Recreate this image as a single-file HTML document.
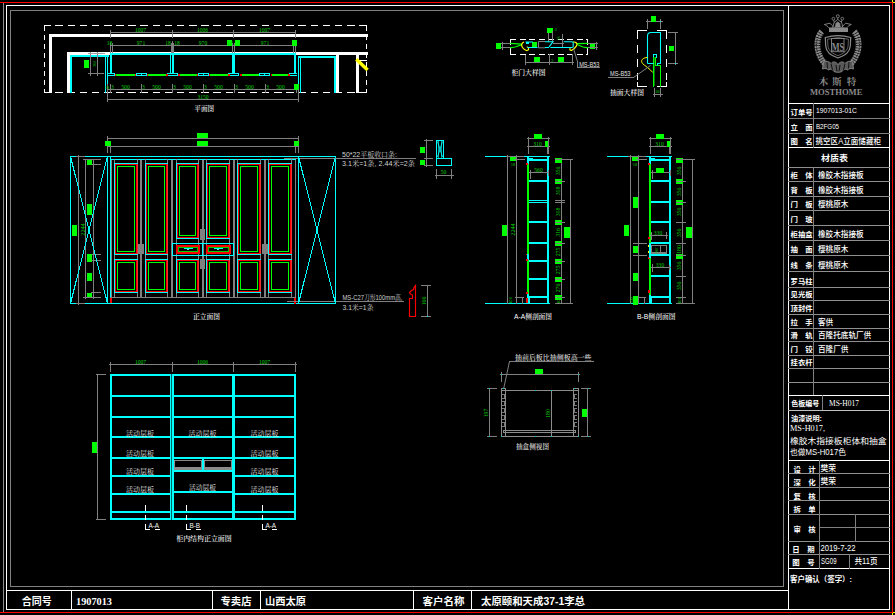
<!DOCTYPE html>
<html lang="zh"><head><meta charset="utf-8"><title>CAD</title>
<style>
html,body{margin:0;padding:0;background:#000;}
body{width:895px;height:615px;overflow:hidden;position:relative;}
svg{position:absolute;left:0;top:0;display:block;}
text{white-space:pre;}
.s{font-family:"Liberation Serif","Noto Serif CJK SC",serif;}
.h{font-family:"Liberation Sans","Noto Sans CJK SC",sans-serif;}
.m{font-family:"Liberation Mono","Noto Sans CJK SC",monospace;}
.n{font-family:"Liberation Sans","Noto Serif CJK SC",sans-serif;}
</style></head><body>
<svg width="895" height="615" viewBox="0 0 895 615">
<rect x="0" y="0" width="895" height="615" fill="#000"/>
<g shape-rendering="crispEdges">
<rect x="0" y="2" width="893" height="1" fill="#f00"/>
<rect x="892" y="2" width="1" height="611" fill="#f00"/>
<rect x="0" y="612" width="893" height="1" fill="#f00"/>
<rect x="892" y="0" width="1" height="2" fill="#ff0"/>
<rect x="893" y="2" width="2" height="1" fill="#ff0"/>
<rect x="893" y="612" width="2" height="1" fill="#ff0"/>
<rect x="892" y="613" width="1" height="2" fill="#ff0"/>
<rect x="3" y="3" width="1" height="609" fill="#8c8c8c"/>
<rect x="6" y="5" width="884" height="1" fill="#fff"/>
<rect x="6" y="609" width="884" height="1" fill="#fff"/>
<rect x="6" y="5" width="1" height="605" fill="#fff"/>
<rect x="889" y="5" width="1" height="605" fill="#fff"/>
<rect x="10" y="10" width="774" height="1" fill="#808080"/>
<rect x="10" y="586" width="774" height="1" fill="#808080"/>
<rect x="10" y="10" width="1" height="577" fill="#808080"/>
<rect x="783" y="10" width="1" height="577" fill="#808080"/>
<rect x="6" y="590" width="783" height="1" fill="#fff"/>
<rect x="71" y="590" width="1" height="20" fill="#fff"/>
<rect x="212" y="590" width="1" height="20" fill="#fff"/>
<rect x="260" y="590" width="1" height="20" fill="#fff"/>
<rect x="413" y="590" width="1" height="20" fill="#fff"/>
<rect x="471" y="590" width="1" height="20" fill="#fff"/>
<rect x="788" y="5" width="1" height="605" fill="#fff"/>
<rect x="788" y="103" width="102" height="1" fill="#fff"/>
<rect x="788" y="118" width="102" height="1" fill="#808080"/>
<rect x="788" y="133" width="102" height="1" fill="#808080"/>
<rect x="788" y="147" width="102" height="1" fill="#fff"/>
<rect x="788" y="167" width="102" height="1" fill="#909090"/>
<rect x="788" y="181" width="102" height="1" fill="#909090"/>
<rect x="788" y="196" width="102" height="1" fill="#909090"/>
<rect x="788" y="210" width="102" height="1" fill="#909090"/>
<rect x="788" y="225" width="102" height="1" fill="#909090"/>
<rect x="788" y="240" width="102" height="1" fill="#909090"/>
<rect x="788" y="255" width="102" height="1" fill="#909090"/>
<rect x="788" y="271" width="102" height="1" fill="#909090"/>
<rect x="788" y="287" width="102" height="1" fill="#909090"/>
<rect x="788" y="300" width="102" height="1" fill="#909090"/>
<rect x="788" y="314" width="102" height="1" fill="#909090"/>
<rect x="788" y="328" width="102" height="1" fill="#909090"/>
<rect x="788" y="341" width="102" height="1" fill="#909090"/>
<rect x="788" y="355" width="102" height="1" fill="#909090"/>
<rect x="788" y="368" width="102" height="1" fill="#909090"/>
<rect x="788" y="382" width="102" height="1" fill="#909090"/>
<rect x="813" y="103" width="1" height="45" fill="#808080"/>
<rect x="813" y="167" width="1" height="229" fill="#808080"/>
<rect x="788" y="395" width="102" height="1" fill="#fff"/>
<rect x="822" y="395" width="1" height="16" fill="#808080"/>
<rect x="788" y="410" width="102" height="1" fill="#c0c0c0"/>
<rect x="788" y="460" width="102" height="1" fill="#fff"/>
<rect x="788" y="473" width="102" height="1" fill="#909090"/>
<rect x="788" y="487" width="102" height="1" fill="#909090"/>
<rect x="788" y="500" width="102" height="1" fill="#909090"/>
<rect x="788" y="514" width="102" height="1" fill="#909090"/>
<rect x="788" y="541" width="102" height="1" fill="#909090"/>
<rect x="788" y="554" width="102" height="1" fill="#909090"/>
<rect x="788" y="568" width="102" height="1" fill="#fff"/>
<rect x="819" y="460" width="1" height="109" fill="#808080"/>
<rect x="819" y="527" width="71" height="1" fill="#808080"/>
<rect x="855" y="514" width="1" height="28" fill="#808080"/>
<rect x="849" y="554" width="1" height="15" fill="#808080"/>
<rect x="44" y="25" width="6.75" height="1" fill="#fff"/>
<rect x="55.4" y="25" width="7.5" height="1" fill="#fff"/>
<rect x="67.55" y="25" width="7.5" height="1" fill="#fff"/>
<rect x="79.7" y="25" width="7.5" height="1" fill="#fff"/>
<rect x="91.85" y="25" width="7.5" height="1" fill="#fff"/>
<rect x="104" y="25" width="7.5" height="1" fill="#fff"/>
<rect x="116.15" y="25" width="7.5" height="1" fill="#fff"/>
<rect x="128.3" y="25" width="7.5" height="1" fill="#fff"/>
<rect x="140.45" y="25" width="7.5" height="1" fill="#fff"/>
<rect x="152.6" y="25" width="7.5" height="1" fill="#fff"/>
<rect x="164.75" y="25" width="7.5" height="1" fill="#fff"/>
<rect x="176.9" y="25" width="7.5" height="1" fill="#fff"/>
<rect x="189.05" y="25" width="7.5" height="1" fill="#fff"/>
<rect x="201.2" y="25" width="7.5" height="1" fill="#fff"/>
<rect x="213.35" y="25" width="7.5" height="1" fill="#fff"/>
<rect x="225.5" y="25" width="7.5" height="1" fill="#fff"/>
<rect x="237.65" y="25" width="7.5" height="1" fill="#fff"/>
<rect x="249.8" y="25" width="7.5" height="1" fill="#fff"/>
<rect x="261.95" y="25" width="7.5" height="1" fill="#fff"/>
<rect x="274.1" y="25" width="7.5" height="1" fill="#fff"/>
<rect x="286.25" y="25" width="7.5" height="1" fill="#fff"/>
<rect x="298.4" y="25" width="7.5" height="1" fill="#fff"/>
<rect x="310.55" y="25" width="7.5" height="1" fill="#fff"/>
<rect x="322.7" y="25" width="7.5" height="1" fill="#fff"/>
<rect x="334.85" y="25" width="7.5" height="1" fill="#fff"/>
<rect x="347" y="25" width="7.5" height="1" fill="#fff"/>
<rect x="359.15" y="25" width="7.5" height="1" fill="#fff"/>
<rect x="44" y="92" width="6.75" height="1" fill="#fff"/>
<rect x="55.4" y="92" width="7.5" height="1" fill="#fff"/>
<rect x="67.55" y="92" width="7.5" height="1" fill="#fff"/>
<rect x="79.7" y="92" width="7.5" height="1" fill="#fff"/>
<rect x="91.85" y="92" width="7.5" height="1" fill="#fff"/>
<rect x="104" y="92" width="7.5" height="1" fill="#fff"/>
<rect x="116.15" y="92" width="7.5" height="1" fill="#fff"/>
<rect x="128.3" y="92" width="7.5" height="1" fill="#fff"/>
<rect x="140.45" y="92" width="7.5" height="1" fill="#fff"/>
<rect x="152.6" y="92" width="7.5" height="1" fill="#fff"/>
<rect x="164.75" y="92" width="7.5" height="1" fill="#fff"/>
<rect x="176.9" y="92" width="7.5" height="1" fill="#fff"/>
<rect x="189.05" y="92" width="7.5" height="1" fill="#fff"/>
<rect x="201.2" y="92" width="7.5" height="1" fill="#fff"/>
<rect x="213.35" y="92" width="7.5" height="1" fill="#fff"/>
<rect x="225.5" y="92" width="7.5" height="1" fill="#fff"/>
<rect x="237.65" y="92" width="7.5" height="1" fill="#fff"/>
<rect x="249.8" y="92" width="7.5" height="1" fill="#fff"/>
<rect x="261.95" y="92" width="7.5" height="1" fill="#fff"/>
<rect x="274.1" y="92" width="7.5" height="1" fill="#fff"/>
<rect x="286.25" y="92" width="7.5" height="1" fill="#fff"/>
<rect x="298.4" y="92" width="7.5" height="1" fill="#fff"/>
<rect x="310.55" y="92" width="7.5" height="1" fill="#fff"/>
<rect x="322.7" y="92" width="7.5" height="1" fill="#fff"/>
<rect x="334.85" y="92" width="7.5" height="1" fill="#fff"/>
<rect x="347" y="92" width="7.5" height="1" fill="#fff"/>
<rect x="359.15" y="92" width="7.5" height="1" fill="#fff"/>
<rect x="44" y="25.5" width="1" height="5.2" fill="#fff"/>
<rect x="44" y="34.6" width="1" height="5.2" fill="#fff"/>
<rect x="44" y="43.7" width="1" height="5.2" fill="#fff"/>
<rect x="44" y="52.8" width="1" height="5.2" fill="#fff"/>
<rect x="44" y="61.9" width="1" height="5.2" fill="#fff"/>
<rect x="44" y="71" width="1" height="5.2" fill="#fff"/>
<rect x="44" y="80.1" width="1" height="5.2" fill="#fff"/>
<rect x="44" y="89.2" width="1" height="3.8" fill="#fff"/>
<rect x="366" y="25.5" width="1" height="5.2" fill="#fff"/>
<rect x="366" y="34.6" width="1" height="5.2" fill="#fff"/>
<rect x="366" y="43.7" width="1" height="5.2" fill="#fff"/>
<rect x="366" y="52.8" width="1" height="5.2" fill="#fff"/>
<rect x="366" y="61.9" width="1" height="5.2" fill="#fff"/>
<rect x="366" y="71" width="1" height="5.2" fill="#fff"/>
<rect x="366" y="80.1" width="1" height="5.2" fill="#fff"/>
<rect x="366" y="89.2" width="1" height="3.8" fill="#fff"/>
<rect x="49" y="34" width="319" height="3" fill="#fff"/>
<rect x="49" y="34" width="3" height="59" fill="#fff"/>
<rect x="67" y="52" width="44" height="3" fill="#fff"/>
<rect x="67" y="52" width="3" height="41" fill="#fff"/>
<rect x="296" y="52" width="72" height="3" fill="#fff"/>
<rect x="110" y="52" width="186" height="1" fill="#fff"/>
<rect x="70" y="55" width="2" height="38" fill="#0ff"/>
<rect x="70" y="55" width="39" height="2" fill="#0ff"/>
<rect x="105" y="57" width="1" height="36" fill="#0ff"/>
<rect x="107" y="57" width="1" height="36" fill="#0ff"/>
<rect x="110" y="53" width="186" height="2" fill="#0ff"/>
<rect x="110" y="53" width="2" height="21" fill="#0ff"/>
<rect x="294" y="53" width="2" height="21" fill="#0ff"/>
<rect x="170" y="55" width="1" height="19" fill="#0ff"/>
<rect x="172" y="55" width="2" height="19" fill="#0ff"/>
<rect x="232" y="55" width="3" height="19" fill="#0ff"/>
<rect x="108" y="73" width="7" height="1" fill="#0ff"/>
<rect x="108" y="75" width="7" height="1" fill="#0ff"/>
<rect x="114" y="73" width="1" height="3" fill="#0ff"/>
<rect x="167" y="73" width="11" height="1" fill="#0ff"/>
<rect x="167" y="75" width="11" height="1" fill="#0ff"/>
<rect x="167" y="73" width="1" height="3" fill="#0ff"/>
<rect x="177" y="73" width="1" height="3" fill="#0ff"/>
<rect x="228" y="73" width="11" height="1" fill="#0ff"/>
<rect x="228" y="75" width="11" height="1" fill="#0ff"/>
<rect x="228" y="73" width="1" height="3" fill="#0ff"/>
<rect x="238" y="73" width="1" height="3" fill="#0ff"/>
<rect x="289" y="73" width="8" height="1" fill="#0ff"/>
<rect x="289" y="75" width="8" height="1" fill="#0ff"/>
<rect x="289" y="73" width="1" height="3" fill="#0ff"/>
<rect x="116" y="74" width="19" height="2" fill="#0f0"/>
<rect x="148" y="74" width="18" height="2" fill="#0f0"/>
<rect x="180" y="74" width="17" height="2" fill="#0f0"/>
<rect x="210" y="74" width="18" height="2" fill="#0f0"/>
<rect x="242" y="74" width="17" height="2" fill="#0f0"/>
<rect x="272" y="74" width="16" height="2" fill="#0f0"/>
<rect x="114.6" y="74" width="1.5" height="2" fill="#f00"/>
<rect x="166" y="74" width="1.5" height="2" fill="#f00"/>
<rect x="178" y="74" width="1.5" height="2" fill="#f00"/>
<rect x="228" y="74" width="1.5" height="2" fill="#f00"/>
<rect x="240" y="74" width="1.5" height="2" fill="#f00"/>
<rect x="288" y="74" width="1.5" height="2" fill="#f00"/>
<rect x="134.5" y="74" width="1" height="1.5" fill="#f00"/>
<rect x="146.5" y="74" width="1" height="1.5" fill="#f00"/>
<rect x="196.5" y="74" width="1" height="1.5" fill="#f00"/>
<rect x="208.5" y="74" width="1" height="1.5" fill="#f00"/>
<rect x="258.5" y="74" width="1" height="1.5" fill="#f00"/>
<rect x="270.5" y="74" width="1" height="1.5" fill="#f00"/>
<rect x="136" y="73" width="11" height="1" fill="#0ff"/>
<rect x="136" y="75" width="11" height="1" fill="#0ff"/>
<rect x="136" y="73" width="1" height="3" fill="#0ff"/>
<rect x="146" y="73" width="1" height="3" fill="#0ff"/>
<rect x="141" y="73" width="1" height="3" fill="#0ff"/>
<rect x="198" y="73" width="11" height="1" fill="#0ff"/>
<rect x="198" y="75" width="11" height="1" fill="#0ff"/>
<rect x="198" y="73" width="1" height="3" fill="#0ff"/>
<rect x="208" y="73" width="1" height="3" fill="#0ff"/>
<rect x="203" y="73" width="1" height="3" fill="#0ff"/>
<rect x="259" y="73" width="11" height="1" fill="#0ff"/>
<rect x="259" y="75" width="11" height="1" fill="#0ff"/>
<rect x="259" y="73" width="1" height="3" fill="#0ff"/>
<rect x="269" y="73" width="1" height="3" fill="#0ff"/>
<rect x="264" y="73" width="1" height="3" fill="#0ff"/>
<rect x="298" y="56" width="1" height="37" fill="#0ff"/>
<rect x="300" y="56" width="1" height="37" fill="#0ff"/>
<rect x="298" y="56" width="38" height="2" fill="#0ff"/>
<rect x="334" y="56" width="2" height="37" fill="#0ff"/>
<rect x="336" y="55" width="3" height="38" fill="#fff"/>
<rect x="356" y="55" width="3" height="38" fill="#fff"/>
<rect x="359" y="60" width="8" height="1" fill="#fff"/>
<rect x="110" y="32" width="186" height="1" fill="#808080"/>
<rect x="110" y="30" width="1" height="8" fill="#808080"/>
<rect x="172" y="30" width="1" height="8" fill="#808080"/>
<rect x="233" y="30" width="1" height="8" fill="#808080"/>
<rect x="295" y="30" width="1" height="8" fill="#808080"/>
<rect x="110" y="45" width="186" height="1" fill="#808080"/>
<rect x="110" y="43" width="1" height="10" fill="#808080"/>
<rect x="112" y="43" width="1" height="10" fill="#808080"/>
<rect x="171" y="43" width="1" height="10" fill="#808080"/>
<rect x="173" y="43" width="1" height="10" fill="#808080"/>
<rect x="232" y="43" width="1" height="10" fill="#808080"/>
<rect x="234" y="43" width="1" height="10" fill="#808080"/>
<rect x="293" y="43" width="1" height="10" fill="#808080"/>
<rect x="295" y="43" width="1" height="10" fill="#808080"/>
<rect x="172" y="41" width="1" height="12" fill="#808080"/>
<rect x="227" y="40" width="5" height="6" fill="#0f0"/>
<rect x="235" y="40" width="5" height="6" fill="#0f0"/>
<rect x="292" y="40" width="5" height="6" fill="#0f0"/>
<rect x="107" y="89" width="192" height="1" fill="#808080"/>
<rect x="107" y="84" width="1" height="9" fill="#808080"/>
<rect x="110" y="84" width="1" height="9" fill="#808080"/>
<rect x="141" y="84" width="1" height="9" fill="#808080"/>
<rect x="172" y="84" width="1" height="9" fill="#808080"/>
<rect x="203" y="84" width="1" height="9" fill="#808080"/>
<rect x="234" y="84" width="1" height="9" fill="#808080"/>
<rect x="265" y="84" width="1" height="9" fill="#808080"/>
<rect x="296" y="84" width="1" height="9" fill="#808080"/>
<rect x="298" y="84" width="1" height="9" fill="#808080"/>
<rect x="294" y="84" width="5" height="6" fill="#0f0"/>
<rect x="107" y="99" width="192" height="1" fill="#808080"/>
<rect x="107" y="92" width="1" height="10" fill="#808080"/>
<rect x="298" y="89" width="1" height="13" fill="#808080"/>
<rect x="90" y="52" width="1" height="24" fill="#808080"/>
<rect x="97" y="52" width="1" height="24" fill="#808080"/>
<rect x="88" y="53" width="17" height="1" fill="#a0a0a0"/>
<rect x="88" y="73" width="16" height="1" fill="#808080"/>
<rect x="84" y="60" width="5" height="8" fill="#0f0"/>
<rect x="107" y="138" width="192" height="1" fill="#808080"/>
<rect x="107" y="146" width="192" height="1" fill="#808080"/>
<rect x="107" y="136" width="1" height="17" fill="#808080"/>
<rect x="110" y="146" width="1" height="7" fill="#808080"/>
<rect x="298" y="136" width="1" height="17" fill="#808080"/>
<rect x="295" y="146" width="1" height="7" fill="#808080"/>
<rect x="105" y="141" width="6" height="5" fill="#0f0"/>
<rect x="294" y="141" width="5" height="5" fill="#0f0"/>
<rect x="197" y="133" width="11" height="5" fill="#0f0"/>
<rect x="197" y="141" width="11" height="5" fill="#0f0"/>
<rect x="70" y="156" width="266" height="1" fill="#0ff"/>
<rect x="70" y="303" width="266" height="1" fill="#0ff"/>
<rect x="70" y="156" width="1" height="148" fill="#0ff"/>
<rect x="107" y="156" width="1" height="148" fill="#0ff"/>
<rect x="298" y="156" width="1" height="148" fill="#0ff"/>
<rect x="335" y="156" width="1" height="148" fill="#0ff"/>
<rect x="110" y="156" width="1" height="142" fill="#0ff"/>
<rect x="110" y="159" width="186" height="1" fill="#0ff"/>
<rect x="76" y="156" width="9" height="1" fill="#808080"/>
<rect x="78" y="155" width="1" height="150" fill="#808080"/>
<rect x="85" y="159" width="1" height="140" fill="#808080"/>
<rect x="93" y="159" width="1" height="140" fill="#808080"/>
<rect x="83" y="159" width="18" height="1" fill="#808080"/>
<rect x="92" y="164" width="9" height="1" fill="#808080"/>
<rect x="92" y="254" width="9" height="1" fill="#808080"/>
<rect x="92" y="260" width="9" height="1" fill="#808080"/>
<rect x="91" y="292" width="10" height="1" fill="#808080"/>
<rect x="83" y="297" width="18" height="1" fill="#808080"/>
<rect x="76" y="303" width="9" height="1" fill="#808080"/>
<rect x="87" y="160" width="5" height="5" fill="#0f0"/>
<rect x="87" y="204" width="5" height="11" fill="#0f0"/>
<rect x="87" y="254" width="5" height="8" fill="#0f0"/>
<rect x="87" y="273" width="5" height="8" fill="#0f0"/>
<rect x="87" y="293" width="5" height="4" fill="#0f0"/>
<rect x="72" y="225" width="5" height="11" fill="#0f0"/>
<rect x="110" y="297" width="2" height="6" fill="#f00"/>
<rect x="294" y="297" width="2" height="7" fill="#f00"/>
<rect x="111" y="160" width="1" height="138" fill="#808080"/>
<rect x="295" y="160" width="1" height="138" fill="#808080"/>
<rect x="110" y="297" width="186" height="1" fill="#808080"/>
<rect x="114" y="159" width="1" height="139" fill="#808080"/>
<rect x="137" y="159" width="1" height="139" fill="#808080"/>
<rect x="145" y="159" width="1" height="139" fill="#808080"/>
<rect x="167" y="159" width="1" height="139" fill="#808080"/>
<rect x="176" y="159" width="1" height="139" fill="#808080"/>
<rect x="198" y="159" width="1" height="139" fill="#808080"/>
<rect x="206" y="159" width="1" height="139" fill="#808080"/>
<rect x="229" y="159" width="1" height="139" fill="#808080"/>
<rect x="237" y="159" width="1" height="139" fill="#808080"/>
<rect x="260" y="159" width="1" height="139" fill="#808080"/>
<rect x="268" y="159" width="1" height="139" fill="#808080"/>
<rect x="291" y="159" width="1" height="139" fill="#808080"/>
<rect x="140" y="160" width="2" height="138" fill="#808080"/>
<rect x="171" y="160" width="2" height="138" fill="#808080"/>
<rect x="202" y="160" width="2" height="138" fill="#808080"/>
<rect x="233" y="160" width="2" height="138" fill="#808080"/>
<rect x="264" y="160" width="2" height="138" fill="#808080"/>
<rect x="114" y="163" width="24" height="1" fill="#0ff"/>
<rect x="114" y="254" width="24" height="1" fill="#0ff"/>
<rect x="114" y="163" width="1" height="92" fill="#0ff"/>
<rect x="137" y="163" width="1" height="92" fill="#0ff"/>
<rect x="137" y="164" width="1" height="90" fill="#e33"/>
<rect x="115" y="164" width="22" height="1" fill="#f00"/>
<rect x="115" y="253" width="22" height="1" fill="#f00"/>
<rect x="115" y="164" width="1" height="90" fill="#f00"/>
<rect x="136" y="164" width="1" height="90" fill="#f00"/>
<rect x="117" y="166" width="18" height="1" fill="#0f0"/>
<rect x="117" y="251" width="18" height="1" fill="#0f0"/>
<rect x="117" y="166" width="1" height="86" fill="#0f0"/>
<rect x="134" y="166" width="1" height="86" fill="#0f0"/>
<rect x="114" y="259" width="24" height="1" fill="#0ff"/>
<rect x="114" y="292" width="24" height="1" fill="#0ff"/>
<rect x="114" y="259" width="1" height="34" fill="#0ff"/>
<rect x="137" y="259" width="1" height="34" fill="#0ff"/>
<rect x="137" y="260" width="1" height="32" fill="#e33"/>
<rect x="115" y="260" width="22" height="1" fill="#f00"/>
<rect x="115" y="291" width="22" height="1" fill="#f00"/>
<rect x="115" y="260" width="1" height="32" fill="#f00"/>
<rect x="136" y="260" width="1" height="32" fill="#f00"/>
<rect x="117" y="262" width="18" height="1" fill="#0f0"/>
<rect x="117" y="289" width="18" height="1" fill="#0f0"/>
<rect x="117" y="262" width="1" height="28" fill="#0f0"/>
<rect x="134" y="262" width="1" height="28" fill="#0f0"/>
<rect x="145" y="163" width="23" height="1" fill="#0ff"/>
<rect x="145" y="254" width="23" height="1" fill="#0ff"/>
<rect x="145" y="163" width="1" height="92" fill="#0ff"/>
<rect x="167" y="163" width="1" height="92" fill="#0ff"/>
<rect x="167" y="164" width="1" height="90" fill="#e33"/>
<rect x="146" y="164" width="21" height="1" fill="#f00"/>
<rect x="146" y="253" width="21" height="1" fill="#f00"/>
<rect x="146" y="164" width="1" height="90" fill="#f00"/>
<rect x="166" y="164" width="1" height="90" fill="#f00"/>
<rect x="148" y="166" width="17" height="1" fill="#0f0"/>
<rect x="148" y="251" width="17" height="1" fill="#0f0"/>
<rect x="148" y="166" width="1" height="86" fill="#0f0"/>
<rect x="164" y="166" width="1" height="86" fill="#0f0"/>
<rect x="145" y="259" width="23" height="1" fill="#0ff"/>
<rect x="145" y="292" width="23" height="1" fill="#0ff"/>
<rect x="145" y="259" width="1" height="34" fill="#0ff"/>
<rect x="167" y="259" width="1" height="34" fill="#0ff"/>
<rect x="167" y="260" width="1" height="32" fill="#e33"/>
<rect x="146" y="260" width="21" height="1" fill="#f00"/>
<rect x="146" y="291" width="21" height="1" fill="#f00"/>
<rect x="146" y="260" width="1" height="32" fill="#f00"/>
<rect x="166" y="260" width="1" height="32" fill="#f00"/>
<rect x="148" y="262" width="17" height="1" fill="#0f0"/>
<rect x="148" y="289" width="17" height="1" fill="#0f0"/>
<rect x="148" y="262" width="1" height="28" fill="#0f0"/>
<rect x="164" y="262" width="1" height="28" fill="#0f0"/>
<rect x="176" y="163" width="23" height="1" fill="#0ff"/>
<rect x="176" y="238" width="23" height="1" fill="#0ff"/>
<rect x="176" y="163" width="1" height="76" fill="#0ff"/>
<rect x="198" y="163" width="1" height="76" fill="#0ff"/>
<rect x="198" y="164" width="1" height="74" fill="#e33"/>
<rect x="177" y="164" width="21" height="1" fill="#f00"/>
<rect x="177" y="237" width="21" height="1" fill="#f00"/>
<rect x="177" y="164" width="1" height="74" fill="#f00"/>
<rect x="197" y="164" width="1" height="74" fill="#f00"/>
<rect x="179" y="166" width="17" height="1" fill="#0f0"/>
<rect x="179" y="235" width="17" height="1" fill="#0f0"/>
<rect x="179" y="166" width="1" height="70" fill="#0f0"/>
<rect x="195" y="166" width="1" height="70" fill="#0f0"/>
<rect x="176" y="259" width="23" height="1" fill="#0ff"/>
<rect x="176" y="292" width="23" height="1" fill="#0ff"/>
<rect x="176" y="259" width="1" height="34" fill="#0ff"/>
<rect x="198" y="259" width="1" height="34" fill="#0ff"/>
<rect x="198" y="260" width="1" height="32" fill="#e33"/>
<rect x="177" y="260" width="21" height="1" fill="#f00"/>
<rect x="177" y="291" width="21" height="1" fill="#f00"/>
<rect x="177" y="260" width="1" height="32" fill="#f00"/>
<rect x="197" y="260" width="1" height="32" fill="#f00"/>
<rect x="179" y="262" width="17" height="1" fill="#0f0"/>
<rect x="179" y="289" width="17" height="1" fill="#0f0"/>
<rect x="179" y="262" width="1" height="28" fill="#0f0"/>
<rect x="195" y="262" width="1" height="28" fill="#0f0"/>
<rect x="206" y="163" width="24" height="1" fill="#0ff"/>
<rect x="206" y="238" width="24" height="1" fill="#0ff"/>
<rect x="206" y="163" width="1" height="76" fill="#0ff"/>
<rect x="229" y="163" width="1" height="76" fill="#0ff"/>
<rect x="229" y="164" width="1" height="74" fill="#e33"/>
<rect x="207" y="164" width="22" height="1" fill="#f00"/>
<rect x="207" y="237" width="22" height="1" fill="#f00"/>
<rect x="207" y="164" width="1" height="74" fill="#f00"/>
<rect x="228" y="164" width="1" height="74" fill="#f00"/>
<rect x="209" y="166" width="18" height="1" fill="#0f0"/>
<rect x="209" y="235" width="18" height="1" fill="#0f0"/>
<rect x="209" y="166" width="1" height="70" fill="#0f0"/>
<rect x="226" y="166" width="1" height="70" fill="#0f0"/>
<rect x="206" y="259" width="24" height="1" fill="#0ff"/>
<rect x="206" y="292" width="24" height="1" fill="#0ff"/>
<rect x="206" y="259" width="1" height="34" fill="#0ff"/>
<rect x="229" y="259" width="1" height="34" fill="#0ff"/>
<rect x="229" y="260" width="1" height="32" fill="#e33"/>
<rect x="207" y="260" width="22" height="1" fill="#f00"/>
<rect x="207" y="291" width="22" height="1" fill="#f00"/>
<rect x="207" y="260" width="1" height="32" fill="#f00"/>
<rect x="228" y="260" width="1" height="32" fill="#f00"/>
<rect x="209" y="262" width="18" height="1" fill="#0f0"/>
<rect x="209" y="289" width="18" height="1" fill="#0f0"/>
<rect x="209" y="262" width="1" height="28" fill="#0f0"/>
<rect x="226" y="262" width="1" height="28" fill="#0f0"/>
<rect x="237" y="163" width="24" height="1" fill="#0ff"/>
<rect x="237" y="254" width="24" height="1" fill="#0ff"/>
<rect x="237" y="163" width="1" height="92" fill="#0ff"/>
<rect x="260" y="163" width="1" height="92" fill="#0ff"/>
<rect x="260" y="164" width="1" height="90" fill="#e33"/>
<rect x="238" y="164" width="22" height="1" fill="#f00"/>
<rect x="238" y="253" width="22" height="1" fill="#f00"/>
<rect x="238" y="164" width="1" height="90" fill="#f00"/>
<rect x="259" y="164" width="1" height="90" fill="#f00"/>
<rect x="240" y="166" width="18" height="1" fill="#0f0"/>
<rect x="240" y="251" width="18" height="1" fill="#0f0"/>
<rect x="240" y="166" width="1" height="86" fill="#0f0"/>
<rect x="257" y="166" width="1" height="86" fill="#0f0"/>
<rect x="237" y="259" width="24" height="1" fill="#0ff"/>
<rect x="237" y="292" width="24" height="1" fill="#0ff"/>
<rect x="237" y="259" width="1" height="34" fill="#0ff"/>
<rect x="260" y="259" width="1" height="34" fill="#0ff"/>
<rect x="260" y="260" width="1" height="32" fill="#e33"/>
<rect x="238" y="260" width="22" height="1" fill="#f00"/>
<rect x="238" y="291" width="22" height="1" fill="#f00"/>
<rect x="238" y="260" width="1" height="32" fill="#f00"/>
<rect x="259" y="260" width="1" height="32" fill="#f00"/>
<rect x="240" y="262" width="18" height="1" fill="#0f0"/>
<rect x="240" y="289" width="18" height="1" fill="#0f0"/>
<rect x="240" y="262" width="1" height="28" fill="#0f0"/>
<rect x="257" y="262" width="1" height="28" fill="#0f0"/>
<rect x="268" y="163" width="24" height="1" fill="#0ff"/>
<rect x="268" y="254" width="24" height="1" fill="#0ff"/>
<rect x="268" y="163" width="1" height="92" fill="#0ff"/>
<rect x="291" y="163" width="1" height="92" fill="#0ff"/>
<rect x="291" y="164" width="1" height="90" fill="#e33"/>
<rect x="269" y="164" width="22" height="1" fill="#f00"/>
<rect x="269" y="253" width="22" height="1" fill="#f00"/>
<rect x="269" y="164" width="1" height="90" fill="#f00"/>
<rect x="290" y="164" width="1" height="90" fill="#f00"/>
<rect x="271" y="166" width="18" height="1" fill="#0f0"/>
<rect x="271" y="251" width="18" height="1" fill="#0f0"/>
<rect x="271" y="166" width="1" height="86" fill="#0f0"/>
<rect x="288" y="166" width="1" height="86" fill="#0f0"/>
<rect x="268" y="259" width="24" height="1" fill="#0ff"/>
<rect x="268" y="292" width="24" height="1" fill="#0ff"/>
<rect x="268" y="259" width="1" height="34" fill="#0ff"/>
<rect x="291" y="259" width="1" height="34" fill="#0ff"/>
<rect x="291" y="260" width="1" height="32" fill="#e33"/>
<rect x="269" y="260" width="22" height="1" fill="#f00"/>
<rect x="269" y="291" width="22" height="1" fill="#f00"/>
<rect x="269" y="260" width="1" height="32" fill="#f00"/>
<rect x="290" y="260" width="1" height="32" fill="#f00"/>
<rect x="271" y="262" width="18" height="1" fill="#0f0"/>
<rect x="271" y="289" width="18" height="1" fill="#0f0"/>
<rect x="271" y="262" width="1" height="28" fill="#0f0"/>
<rect x="288" y="262" width="1" height="28" fill="#0f0"/>
<rect x="172" y="243" width="62" height="1" fill="#0ff"/>
<rect x="172" y="255" width="62" height="1" fill="#0ff"/>
<rect x="172" y="243" width="1" height="13" fill="#0ff"/>
<rect x="233" y="243" width="1" height="13" fill="#0ff"/>
<rect x="202" y="243" width="1" height="13" fill="#0ff"/>
<rect x="176" y="245" width="24" height="1" fill="#f00"/>
<rect x="176" y="253" width="24" height="1" fill="#f00"/>
<rect x="176" y="245" width="1" height="9" fill="#f00"/>
<rect x="199" y="245" width="1" height="9" fill="#f00"/>
<rect x="177" y="246" width="22" height="1" fill="#f00"/>
<rect x="177" y="252" width="22" height="1" fill="#f00"/>
<rect x="177" y="246" width="1" height="7" fill="#f00"/>
<rect x="198" y="246" width="1" height="7" fill="#f00"/>
<rect x="178" y="247" width="20" height="1" fill="#0c0"/>
<rect x="178" y="251" width="20" height="1" fill="#0c0"/>
<rect x="178" y="247" width="1" height="5" fill="#0c0"/>
<rect x="197" y="247" width="1" height="5" fill="#0c0"/>
<rect x="184" y="248" width="9" height="1" fill="#0ff"/>
<rect x="187" y="249" width="2" height="1" fill="#7dd"/>
<rect x="206" y="245" width="25" height="1" fill="#f00"/>
<rect x="206" y="253" width="25" height="1" fill="#f00"/>
<rect x="206" y="245" width="1" height="9" fill="#f00"/>
<rect x="230" y="245" width="1" height="9" fill="#f00"/>
<rect x="207" y="246" width="23" height="1" fill="#f00"/>
<rect x="207" y="252" width="23" height="1" fill="#f00"/>
<rect x="207" y="246" width="1" height="7" fill="#f00"/>
<rect x="229" y="246" width="1" height="7" fill="#f00"/>
<rect x="208" y="247" width="21" height="1" fill="#0c0"/>
<rect x="208" y="251" width="21" height="1" fill="#0c0"/>
<rect x="208" y="247" width="1" height="5" fill="#0c0"/>
<rect x="228" y="247" width="1" height="5" fill="#0c0"/>
<rect x="214" y="248" width="9" height="1" fill="#0ff"/>
<rect x="217" y="249" width="2" height="1" fill="#7dd"/>
<rect x="138" y="244" width="5.5" height="10" fill="#808080"/>
<rect x="262" y="244" width="5.5" height="10" fill="#808080"/>
<rect x="200" y="229" width="5" height="10.5" fill="#808080"/>
<rect x="200" y="258.5" width="5" height="10.5" fill="#808080"/>
<rect x="284" y="158" width="132" height="1" fill="#808080"/>
<rect x="287" y="301" width="117" height="1" fill="#808080"/>
<rect x="426" y="139" width="1" height="28" fill="#808080"/>
<rect x="424" y="140" width="9" height="1" fill="#808080"/>
<rect x="424" y="158" width="9" height="1" fill="#808080"/>
<rect x="424" y="165" width="9" height="1" fill="#808080"/>
<rect x="420" y="147" width="5" height="6" fill="#0f0"/>
<rect x="420" y="160" width="5" height="5" fill="#0f0"/>
<rect x="436" y="140" width="8" height="1" fill="#0ff"/>
<rect x="436" y="158" width="8" height="1" fill="#0ff"/>
<rect x="436" y="140" width="1" height="19" fill="#0ff"/>
<rect x="443" y="140" width="1" height="19" fill="#0ff"/>
<rect x="436" y="158" width="16" height="1" fill="#0ff"/>
<rect x="436" y="165" width="16" height="1" fill="#0ff"/>
<rect x="436" y="158" width="1" height="8" fill="#0ff"/>
<rect x="451" y="158" width="1" height="8" fill="#0ff"/>
<rect x="438" y="141" width="1" height="17" fill="#099"/>
<rect x="441" y="141" width="1" height="17" fill="#099"/>
<rect x="435" y="175" width="19" height="1" fill="#808080"/>
<rect x="436" y="169" width="1" height="10" fill="#808080"/>
<rect x="451" y="169" width="1" height="10" fill="#808080"/>
<rect x="427" y="285" width="1" height="32" fill="#808080"/>
<rect x="421" y="285" width="10" height="1" fill="#808080"/>
<rect x="421" y="316" width="10" height="1" fill="#808080"/>
<rect x="415" y="285" width="1" height="1" fill="#0ff"/>
<rect x="415" y="316" width="1" height="1" fill="#0ff"/>
<rect x="427" y="316" width="1" height="1" fill="#0ff"/>
<rect x="485" y="156" width="65" height="1" fill="#0ff"/>
<rect x="485" y="303" width="65" height="1" fill="#0ff"/>
<rect x="506" y="156" width="18" height="1" fill="#808080"/>
<rect x="507" y="155" width="1" height="149" fill="#808080"/>
<rect x="516" y="155" width="1" height="149" fill="#808080"/>
<rect x="510" y="157" width="6" height="4" fill="#0f0"/>
<rect x="514" y="159" width="11" height="1" fill="#808080"/>
<rect x="527" y="138" width="23" height="1" fill="#808080"/>
<rect x="527" y="146" width="23" height="1" fill="#808080"/>
<rect x="528" y="137" width="1" height="17" fill="#808080"/>
<rect x="548" y="137" width="1" height="17" fill="#808080"/>
<rect x="547" y="146" width="1" height="8" fill="#808080"/>
<rect x="534" y="134" width="8" height="5" fill="#0f0"/>
<rect x="545" y="141" width="3" height="6" fill="#0f0"/>
<rect x="527" y="164" width="2" height="134" fill="#0f0"/>
<rect x="547" y="156" width="2" height="148" fill="#0ff"/>
<rect x="527" y="156" width="22" height="1" fill="#0ff"/>
<rect x="527" y="156" width="2" height="8" fill="#0ff"/>
<rect x="529" y="159" width="20" height="2" fill="#0ff"/>
<rect x="529" y="158" width="4" height="1" fill="#0ff"/>
<rect x="526" y="163" width="2" height="2" fill="#f00"/>
<rect x="529" y="180" width="20" height="2" fill="#0ff"/>
<rect x="529" y="221" width="20" height="2" fill="#0ff"/>
<rect x="529" y="242" width="20" height="2" fill="#0ff"/>
<rect x="529" y="260" width="20" height="2" fill="#0ff"/>
<rect x="529" y="278" width="20" height="2" fill="#0ff"/>
<rect x="529" y="200" width="20" height="1" fill="#0ff"/>
<rect x="529" y="202" width="20" height="1" fill="#0ff"/>
<rect x="529" y="297" width="20" height="1" fill="#0ff"/>
<rect x="529" y="303" width="20" height="1" fill="#0ff"/>
<rect x="529" y="297" width="1" height="7" fill="#0ff"/>
<rect x="548" y="297" width="1" height="7" fill="#0ff"/>
<rect x="529" y="296" width="20" height="1" fill="#0ff"/>
<rect x="529" y="172" width="20" height="1" fill="#808080"/>
<rect x="530" y="170" width="1" height="9" fill="#808080"/>
<rect x="548" y="170" width="1" height="6" fill="#808080"/>
<rect x="561" y="159" width="1" height="145" fill="#808080"/>
<rect x="570" y="159" width="1" height="145" fill="#808080"/>
<rect x="555" y="159" width="18" height="1" fill="#808080"/>
<rect x="555" y="181" width="10" height="1" fill="#808080"/>
<rect x="555" y="200" width="10" height="1" fill="#808080"/>
<rect x="555" y="202" width="10" height="1" fill="#808080"/>
<rect x="555" y="222" width="10" height="1" fill="#808080"/>
<rect x="555" y="243" width="10" height="1" fill="#808080"/>
<rect x="555" y="261" width="10" height="1" fill="#808080"/>
<rect x="555" y="279" width="10" height="1" fill="#808080"/>
<rect x="555" y="297" width="10" height="1" fill="#808080"/>
<rect x="555" y="303" width="10" height="1" fill="#808080"/>
<rect x="555" y="303" width="18" height="1" fill="#808080"/>
<rect x="564" y="227" width="6" height="11" fill="#0f0"/>
<rect x="502" y="225" width="5" height="11" fill="#0f0"/>
<rect x="515" y="297" width="9" height="1" fill="#808080"/>
<rect x="522" y="297" width="1" height="7" fill="#808080"/>
<rect x="555" y="158" width="7" height="5" fill="#0f0"/>
<rect x="555" y="179" width="7" height="5" fill="#0f0"/>
<rect x="555" y="220" width="7" height="5" fill="#0f0"/>
<rect x="555" y="241" width="7" height="5" fill="#0f0"/>
<rect x="555" y="259" width="7" height="5" fill="#0f0"/>
<rect x="555" y="277" width="7" height="5" fill="#0f0"/>
<rect x="555" y="295" width="7" height="5" fill="#0f0"/>
<rect x="555" y="159" width="10" height="1" fill="#808080"/>
<rect x="555" y="181" width="10" height="1" fill="#808080"/>
<rect x="555" y="222" width="10" height="1" fill="#808080"/>
<rect x="555" y="243" width="10" height="1" fill="#808080"/>
<rect x="555" y="261" width="10" height="1" fill="#808080"/>
<rect x="555" y="279" width="10" height="1" fill="#808080"/>
<rect x="555" y="297" width="10" height="1" fill="#808080"/>
<rect x="527" y="254" width="2" height="6" fill="#0ff"/>
<rect x="525.5" y="253.5" width="1.5" height="1.5" fill="#f00"/>
<rect x="525.5" y="259" width="2" height="2" fill="#f00"/>
<rect x="527" y="294" width="2" height="10" fill="#0ff"/>
<rect x="525.5" y="292" width="2" height="2" fill="#f00"/>
<rect x="526" y="298" width="2" height="5" fill="#f00"/>
<rect x="607" y="156" width="65" height="1" fill="#0ff"/>
<rect x="607" y="303" width="65" height="1" fill="#0ff"/>
<rect x="628" y="156" width="18" height="1" fill="#808080"/>
<rect x="630" y="155" width="1" height="149" fill="#808080"/>
<rect x="638" y="155" width="1" height="149" fill="#808080"/>
<rect x="632" y="157" width="6" height="4" fill="#0f0"/>
<rect x="636" y="159" width="11" height="1" fill="#808080"/>
<rect x="649" y="138" width="23" height="1" fill="#808080"/>
<rect x="649" y="146" width="23" height="1" fill="#808080"/>
<rect x="650" y="137" width="1" height="17" fill="#808080"/>
<rect x="670" y="137" width="1" height="17" fill="#808080"/>
<rect x="669" y="146" width="1" height="8" fill="#808080"/>
<rect x="656" y="134" width="8" height="5" fill="#0f0"/>
<rect x="667" y="141" width="3" height="6" fill="#0f0"/>
<rect x="649" y="164" width="2" height="134" fill="#0f0"/>
<rect x="669" y="156" width="2" height="148" fill="#0ff"/>
<rect x="649" y="156" width="22" height="1" fill="#0ff"/>
<rect x="649" y="156" width="2" height="8" fill="#0ff"/>
<rect x="651" y="159" width="20" height="2" fill="#0ff"/>
<rect x="651" y="158" width="4" height="1" fill="#0ff"/>
<rect x="648" y="163" width="2" height="2" fill="#f00"/>
<rect x="651" y="180" width="20" height="2" fill="#0ff"/>
<rect x="651" y="201" width="20" height="2" fill="#0ff"/>
<rect x="651" y="221" width="20" height="2" fill="#0ff"/>
<rect x="651" y="242" width="20" height="2" fill="#0ff"/>
<rect x="651" y="254" width="20" height="2" fill="#0ff"/>
<rect x="651" y="275" width="20" height="2" fill="#0ff"/>
<rect x="651" y="297" width="20" height="1" fill="#0ff"/>
<rect x="651" y="303" width="20" height="1" fill="#0ff"/>
<rect x="651" y="297" width="1" height="7" fill="#0ff"/>
<rect x="670" y="297" width="1" height="7" fill="#0ff"/>
<rect x="651" y="296" width="20" height="1" fill="#0ff"/>
<rect x="651" y="172" width="20" height="1" fill="#808080"/>
<rect x="652" y="170" width="1" height="9" fill="#808080"/>
<rect x="670" y="170" width="1" height="6" fill="#808080"/>
<rect x="656" y="168" width="8" height="5" fill="#0f0"/>
<rect x="682" y="159" width="1" height="145" fill="#808080"/>
<rect x="692" y="159" width="1" height="145" fill="#808080"/>
<rect x="676" y="159" width="19" height="1" fill="#808080"/>
<rect x="676" y="181" width="10" height="1" fill="#808080"/>
<rect x="676" y="202" width="10" height="1" fill="#808080"/>
<rect x="676" y="222" width="10" height="1" fill="#808080"/>
<rect x="676" y="243" width="10" height="1" fill="#808080"/>
<rect x="676" y="255" width="10" height="1" fill="#808080"/>
<rect x="676" y="276" width="10" height="1" fill="#808080"/>
<rect x="676" y="297" width="10" height="1" fill="#808080"/>
<rect x="676" y="303" width="10" height="1" fill="#808080"/>
<rect x="676" y="303" width="19" height="1" fill="#808080"/>
<rect x="686" y="227" width="6" height="11" fill="#0f0"/>
<rect x="624" y="225" width="5" height="11" fill="#0f0"/>
<rect x="637" y="297" width="9" height="1" fill="#808080"/>
<rect x="644" y="297" width="1" height="7" fill="#808080"/>
<rect x="676" y="158" width="7" height="5" fill="#0f0"/>
<rect x="676" y="179" width="7" height="5" fill="#0f0"/>
<rect x="676" y="200" width="7" height="5" fill="#0f0"/>
<rect x="676" y="254" width="7" height="5" fill="#0f0"/>
<rect x="676" y="159" width="10" height="1" fill="#808080"/>
<rect x="676" y="181" width="10" height="1" fill="#808080"/>
<rect x="676" y="202" width="10" height="1" fill="#808080"/>
<rect x="676" y="255" width="10" height="1" fill="#808080"/>
<rect x="633" y="197" width="5" height="11" fill="#0f0"/>
<rect x="633" y="246" width="5" height="7" fill="#0f0"/>
<rect x="633" y="273" width="5" height="8" fill="#0f0"/>
<rect x="633" y="296" width="5" height="9" fill="#0f0"/>
<rect x="624" y="225" width="5" height="11" fill="#0f0"/>
<rect x="633" y="243" width="14" height="1" fill="#808080"/>
<rect x="633" y="255" width="14" height="1" fill="#808080"/>
<rect x="651" y="245" width="16" height="1" fill="#808080"/>
<rect x="651" y="253" width="16" height="1" fill="#808080"/>
<rect x="651" y="245" width="1" height="9" fill="#808080"/>
<rect x="666" y="245" width="1" height="9" fill="#808080"/>
<rect x="660" y="245" width="1" height="9" fill="#808080"/>
<rect x="651" y="252" width="16" height="1" fill="#808080"/>
<rect x="650" y="235" width="18" height="1" fill="#808080"/>
<rect x="651" y="232" width="1" height="8" fill="#808080"/>
<rect x="666" y="232" width="1" height="7" fill="#808080"/>
<rect x="651" y="267" width="20" height="1" fill="#808080"/>
<rect x="652" y="264" width="1" height="8" fill="#808080"/>
<rect x="669" y="265" width="1" height="5" fill="#808080"/>
<rect x="648" y="237" width="2" height="2" fill="#f00"/>
<rect x="648" y="257" width="2" height="2" fill="#f00"/>
<rect x="648" y="290" width="2" height="3" fill="#f00"/>
<rect x="648" y="245" width="1.5" height="2" fill="#ff0"/>
<rect x="648" y="251" width="1.5" height="2" fill="#ff0"/>
<rect x="649" y="243" width="2" height="15" fill="#0ff"/>
<rect x="649" y="295" width="2" height="9" fill="#0ff"/>
<rect x="109" y="364" width="188" height="1" fill="#808080"/>
<rect x="110" y="362" width="1" height="10" fill="#808080"/>
<rect x="172" y="362" width="1" height="10" fill="#808080"/>
<rect x="233" y="362" width="1" height="10" fill="#808080"/>
<rect x="295" y="362" width="1" height="10" fill="#808080"/>
<rect x="97" y="374" width="1" height="146" fill="#808080"/>
<rect x="96" y="374" width="10" height="1" fill="#808080"/>
<rect x="96" y="519" width="10" height="1" fill="#808080"/>
<rect x="92" y="442" width="5" height="11" fill="#0f0"/>
<rect x="110" y="374" width="186" height="2" fill="#0ff"/>
<rect x="110" y="518" width="186" height="2" fill="#0ff"/>
<rect x="110" y="374" width="2" height="146" fill="#0ff"/>
<rect x="294" y="374" width="2" height="146" fill="#0ff"/>
<rect x="170" y="374" width="1" height="146" fill="#0ff"/>
<rect x="172" y="374" width="2" height="146" fill="#0ff"/>
<rect x="171" y="374" width="1" height="146" fill="#066"/>
<rect x="232" y="374" width="3" height="146" fill="#0ff"/>
<rect x="112" y="395" width="58" height="2" fill="#0ff"/>
<rect x="235" y="395" width="59" height="2" fill="#0ff"/>
<rect x="112" y="416" width="58" height="2" fill="#0ff"/>
<rect x="235" y="416" width="59" height="2" fill="#0ff"/>
<rect x="112" y="436" width="58" height="2" fill="#0ff"/>
<rect x="235" y="436" width="59" height="2" fill="#0ff"/>
<rect x="112" y="457" width="58" height="2" fill="#0ff"/>
<rect x="235" y="457" width="59" height="2" fill="#0ff"/>
<rect x="112" y="475" width="58" height="2" fill="#0ff"/>
<rect x="235" y="475" width="59" height="2" fill="#0ff"/>
<rect x="112" y="493" width="58" height="2" fill="#0ff"/>
<rect x="235" y="493" width="59" height="2" fill="#0ff"/>
<rect x="112" y="511" width="58" height="2" fill="#0ff"/>
<rect x="235" y="511" width="59" height="2" fill="#0ff"/>
<rect x="174" y="395" width="58" height="2" fill="#0ff"/>
<rect x="174" y="416" width="58" height="2" fill="#0ff"/>
<rect x="174" y="436" width="58" height="2" fill="#0ff"/>
<rect x="174" y="457" width="58" height="2" fill="#0ff"/>
<rect x="174" y="470" width="58" height="2" fill="#0ff"/>
<rect x="174" y="491" width="58" height="2" fill="#0ff"/>
<rect x="174" y="511" width="58" height="2" fill="#0ff"/>
<rect x="174" y="460" width="28" height="1" fill="#8a8a8a"/>
<rect x="174" y="469" width="28" height="1" fill="#8a8a8a"/>
<rect x="174" y="460" width="1" height="10" fill="#8a8a8a"/>
<rect x="201" y="460" width="1" height="10" fill="#8a8a8a"/>
<rect x="174" y="467" width="28" height="2" fill="#8a8a8a"/>
<rect x="204" y="460" width="28" height="1" fill="#8a8a8a"/>
<rect x="204" y="469" width="28" height="1" fill="#8a8a8a"/>
<rect x="204" y="460" width="1" height="10" fill="#8a8a8a"/>
<rect x="231" y="460" width="1" height="10" fill="#8a8a8a"/>
<rect x="204" y="467" width="28" height="2" fill="#8a8a8a"/>
<rect x="202" y="459" width="2" height="12" fill="#0ff"/>
<rect x="145" y="505" width="1" height="6" fill="#fff"/>
<rect x="145" y="515" width="1" height="5" fill="#fff"/>
<rect x="145" y="524" width="1" height="6" fill="#fff"/>
<rect x="145" y="529" width="5" height="1" fill="#fff"/>
<rect x="155" y="529" width="5" height="1" fill="#fff"/>
<rect x="186" y="505" width="1" height="6" fill="#fff"/>
<rect x="186" y="515" width="1" height="5" fill="#fff"/>
<rect x="186" y="524" width="1" height="6" fill="#fff"/>
<rect x="186" y="529" width="5" height="1" fill="#fff"/>
<rect x="196" y="529" width="5" height="1" fill="#fff"/>
<rect x="262" y="505" width="1" height="6" fill="#fff"/>
<rect x="262" y="515" width="1" height="5" fill="#fff"/>
<rect x="262" y="524" width="1" height="6" fill="#fff"/>
<rect x="262" y="529" width="5" height="1" fill="#fff"/>
<rect x="272" y="529" width="5" height="1" fill="#fff"/>
<rect x="509" y="361" width="85" height="1" fill="#808080"/>
<rect x="500" y="374" width="80" height="1" fill="#808080"/>
<rect x="501" y="372" width="1" height="10" fill="#808080"/>
<rect x="578" y="372" width="1" height="10" fill="#808080"/>
<rect x="535" y="369" width="8" height="5" fill="#0f0"/>
<rect x="501" y="388" width="5" height="1" fill="#8c8c8c"/>
<rect x="573" y="388" width="6" height="1" fill="#8c8c8c"/>
<rect x="501" y="436" width="78" height="1" fill="#8c8c8c"/>
<rect x="501" y="388" width="1" height="49" fill="#8c8c8c"/>
<rect x="505" y="388" width="1" height="49" fill="#8c8c8c"/>
<rect x="573" y="388" width="1" height="49" fill="#8c8c8c"/>
<rect x="578" y="388" width="1" height="49" fill="#8c8c8c"/>
<rect x="501" y="390" width="78" height="1" fill="#8c8c8c"/>
<rect x="503" y="430" width="73" height="1" fill="#8c8c8c"/>
<rect x="503" y="432" width="73" height="1" fill="#8c8c8c"/>
<rect x="503" y="430" width="1" height="3" fill="#8c8c8c"/>
<rect x="575" y="430" width="1" height="3" fill="#8c8c8c"/>
<rect x="504" y="394" width="1" height="5" fill="#7a7a7a"/>
<rect x="502" y="394" width="3" height="1" fill="#7a7a7a"/>
<rect x="502" y="398" width="3" height="1" fill="#7a7a7a"/>
<rect x="574" y="394" width="1" height="5" fill="#7a7a7a"/>
<rect x="574" y="394" width="3" height="1" fill="#7a7a7a"/>
<rect x="574" y="398" width="3" height="1" fill="#7a7a7a"/>
<rect x="504" y="401" width="1" height="5" fill="#7a7a7a"/>
<rect x="502" y="401" width="3" height="1" fill="#7a7a7a"/>
<rect x="502" y="405" width="3" height="1" fill="#7a7a7a"/>
<rect x="574" y="401" width="1" height="5" fill="#7a7a7a"/>
<rect x="574" y="401" width="3" height="1" fill="#7a7a7a"/>
<rect x="574" y="405" width="3" height="1" fill="#7a7a7a"/>
<rect x="504" y="408" width="1" height="5" fill="#7a7a7a"/>
<rect x="502" y="408" width="3" height="1" fill="#7a7a7a"/>
<rect x="502" y="412" width="3" height="1" fill="#7a7a7a"/>
<rect x="574" y="408" width="1" height="5" fill="#7a7a7a"/>
<rect x="574" y="408" width="3" height="1" fill="#7a7a7a"/>
<rect x="574" y="412" width="3" height="1" fill="#7a7a7a"/>
<rect x="504" y="415" width="1" height="5" fill="#7a7a7a"/>
<rect x="502" y="415" width="3" height="1" fill="#7a7a7a"/>
<rect x="502" y="419" width="3" height="1" fill="#7a7a7a"/>
<rect x="574" y="415" width="1" height="5" fill="#7a7a7a"/>
<rect x="574" y="415" width="3" height="1" fill="#7a7a7a"/>
<rect x="574" y="419" width="3" height="1" fill="#7a7a7a"/>
<rect x="504" y="422" width="1" height="5" fill="#7a7a7a"/>
<rect x="502" y="422" width="3" height="1" fill="#7a7a7a"/>
<rect x="502" y="426" width="3" height="1" fill="#7a7a7a"/>
<rect x="574" y="422" width="1" height="5" fill="#7a7a7a"/>
<rect x="574" y="422" width="3" height="1" fill="#7a7a7a"/>
<rect x="574" y="426" width="3" height="1" fill="#7a7a7a"/>
<rect x="551" y="390" width="1" height="47" fill="#8c8c8c"/>
<rect x="489" y="388" width="1" height="49" fill="#808080"/>
<rect x="487" y="388" width="10" height="1" fill="#808080"/>
<rect x="487" y="436" width="10" height="1" fill="#808080"/>
<rect x="587" y="388" width="1" height="49" fill="#808080"/>
<rect x="581" y="388" width="10" height="1" fill="#808080"/>
<rect x="581" y="436" width="10" height="1" fill="#808080"/>
<rect x="582" y="409" width="5" height="8" fill="#0f0"/>
<rect x="503" y="388" width="1" height="1" fill="#0cc"/>
<rect x="535" y="390" width="1" height="1" fill="#0cc"/>
<rect x="551" y="390" width="1" height="1" fill="#0cc"/>
<rect x="574" y="388" width="1" height="1" fill="#0cc"/>
<rect x="489" y="388" width="1" height="1" fill="#0cc"/>
<rect x="489" y="436" width="1" height="1" fill="#0cc"/>
<rect x="501" y="436" width="1" height="1" fill="#0cc"/>
<rect x="535" y="436" width="1" height="1" fill="#0cc"/>
<rect x="551" y="436" width="1" height="1" fill="#0cc"/>
<rect x="578" y="436" width="1" height="1" fill="#0cc"/>
<rect x="588" y="436" width="1" height="1" fill="#0cc"/>
<rect x="588" y="388" width="1" height="1" fill="#0cc"/>
<rect x="578" y="374" width="1" height="1" fill="#0cc"/>
<rect x="501" y="374" width="1" height="1" fill="#0cc"/>
<rect x="510" y="39" width="6.2" height="1" fill="#fff"/>
<rect x="519.5" y="39" width="6.2" height="1" fill="#fff"/>
<rect x="529" y="39" width="6.2" height="1" fill="#fff"/>
<rect x="538.5" y="39" width="6.2" height="1" fill="#fff"/>
<rect x="548" y="39" width="6.2" height="1" fill="#fff"/>
<rect x="557.5" y="39" width="6.2" height="1" fill="#fff"/>
<rect x="567" y="39" width="6.2" height="1" fill="#fff"/>
<rect x="576.5" y="39" width="6.2" height="1" fill="#fff"/>
<rect x="586" y="39" width="2" height="1" fill="#fff"/>
<rect x="510" y="54" width="6.2" height="1" fill="#fff"/>
<rect x="519.5" y="54" width="6.2" height="1" fill="#fff"/>
<rect x="529" y="54" width="6.2" height="1" fill="#fff"/>
<rect x="538.5" y="54" width="6.2" height="1" fill="#fff"/>
<rect x="548" y="54" width="6.2" height="1" fill="#fff"/>
<rect x="557.5" y="54" width="6.2" height="1" fill="#fff"/>
<rect x="567" y="54" width="6.2" height="1" fill="#fff"/>
<rect x="576.5" y="54" width="6.2" height="1" fill="#fff"/>
<rect x="586" y="54" width="2" height="1" fill="#fff"/>
<rect x="510" y="39" width="1" height="6" fill="#fff"/>
<rect x="510" y="48" width="1" height="6" fill="#fff"/>
<rect x="587" y="39" width="1" height="6" fill="#fff"/>
<rect x="587" y="48" width="1" height="6" fill="#fff"/>
<rect x="496" y="43" width="5" height="6" fill="#0f0"/>
<rect x="590" y="43" width="5" height="6" fill="#0f0"/>
<rect x="501" y="43" width="10" height="1" fill="#808080"/>
<rect x="501" y="47" width="10" height="1" fill="#808080"/>
<rect x="502" y="42" width="1" height="8" fill="#808080"/>
<rect x="588" y="43" width="10" height="1" fill="#808080"/>
<rect x="588" y="47" width="10" height="1" fill="#808080"/>
<rect x="596" y="42" width="1" height="8" fill="#808080"/>
<rect x="525.5" y="41.5" width="3" height="2.5" fill="#0ff"/>
<rect x="532" y="42" width="5" height="6" fill="#0f0"/>
<rect x="547" y="28" width="6" height="5" fill="#0f0"/>
<rect x="548" y="33" width="1" height="9" fill="#808080"/>
<rect x="552" y="31" width="1" height="11" fill="#808080"/>
<rect x="562" y="34" width="1" height="13" fill="#808080"/>
<rect x="556" y="43" width="8" height="1" fill="#808080"/>
<rect x="525" y="62" width="49" height="1" fill="#808080"/>
<rect x="525" y="55" width="1" height="10" fill="#808080"/>
<rect x="549" y="54" width="1" height="11" fill="#808080"/>
<rect x="572" y="54" width="1" height="11" fill="#808080"/>
<rect x="534" y="57" width="6" height="5" fill="#0f0"/>
<rect x="558" y="57" width="6" height="5" fill="#0f0"/>
<rect x="577" y="67" width="23" height="1" fill="#808080"/>
<rect x="577" y="62" width="1" height="6" fill="#808080"/>
<rect x="637" y="30" width="10" height="1" fill="#fff"/>
<rect x="657" y="30" width="10" height="1" fill="#fff"/>
<rect x="637" y="86" width="10" height="1" fill="#fff"/>
<rect x="657" y="86" width="10" height="1" fill="#fff"/>
<rect x="637" y="30" width="1" height="9" fill="#fff"/>
<rect x="637" y="45" width="1" height="8" fill="#fff"/>
<rect x="637" y="59" width="1" height="8" fill="#fff"/>
<rect x="637" y="73" width="1" height="7" fill="#fff"/>
<rect x="637" y="82" width="1" height="5" fill="#fff"/>
<rect x="666" y="30" width="1" height="9" fill="#fff"/>
<rect x="666" y="45" width="1" height="8" fill="#fff"/>
<rect x="666" y="59" width="1" height="8" fill="#fff"/>
<rect x="666" y="73" width="1" height="7" fill="#fff"/>
<rect x="666" y="82" width="1" height="5" fill="#fff"/>
<rect x="646" y="21" width="17" height="1" fill="#808080"/>
<rect x="647" y="19" width="1" height="10" fill="#808080"/>
<rect x="660" y="19" width="1" height="10" fill="#808080"/>
<rect x="651" y="16" width="5" height="6" fill="#0f0"/>
<rect x="653" y="54" width="4" height="1" fill="#0ff"/>
<rect x="653" y="57" width="4" height="1" fill="#0ff"/>
<rect x="653" y="54" width="1" height="4" fill="#0ff"/>
<rect x="656" y="54" width="1" height="4" fill="#0ff"/>
<rect x="653" y="57" width="1" height="30" fill="#0f0"/>
<rect x="655" y="57" width="1" height="9" fill="#0f0"/>
<rect x="654" y="57" width="1" height="29" fill="#070"/>
<rect x="655" y="65" width="6" height="1" fill="#0f0"/>
<rect x="660" y="65" width="1" height="22" fill="#0f0"/>
<rect x="675" y="32" width="1" height="33" fill="#808080"/>
<rect x="668" y="32" width="10" height="1" fill="#808080"/>
<rect x="668" y="63" width="10" height="1" fill="#808080"/>
<rect x="669" y="46" width="5" height="5" fill="#0f0"/>
<rect x="608" y="77" width="26" height="1" fill="#808080"/>
<rect x="653" y="94" width="10" height="1" fill="#808080"/>
<rect x="654" y="88" width="1" height="9" fill="#808080"/>
<rect x="660" y="88" width="1" height="9" fill="#808080"/>
<rect x="660" y="21" width="1" height="1" fill="#0ff"/>
<rect x="675" y="63" width="1" height="1" fill="#0ff"/>
<rect x="828.5" y="28.3" width="19" height="3.2" fill="#8a8a8a"/>
</g>
<g fill="none" stroke-linecap="butt">
<path d="M356.3 59.3 L367.6 70" stroke="#ff0" stroke-width="3.4" fill="none"/>
<path shape-rendering="crispEdges" d="M70.5 156.5 L107.5 303.5 M107.5 156.5 L70.5 303.5" stroke="#0ff" stroke-width="1"/>
<path shape-rendering="crispEdges" d="M298.5 156.5 L335.5 303.5 M335.5 156.5 L298.5 303.5" stroke="#0ff" stroke-width="1"/>
<line x1="437.5" y1="141.5" x2="442.5" y2="157" stroke="#0ff" stroke-width="0.9"/>
<line x1="442.5" y1="141.5" x2="437.5" y2="157" stroke="#0ff" stroke-width="0.9"/>
<path d="M415.5 285.5 L414 287.5 L413.5 289.5 L411.5 290.5 L409.5 292.3 L410.5 294 L412.5 295 L412.5 298.5 L409.5 298.5 L409.5 316.5 L415.5 316.5 Z" stroke="#f00" stroke-width="1.15" fill="none"/>
<line x1="509.5" y1="361.5" x2="503.8" y2="388" stroke="#808080" stroke-width="1"/>
<path d="M510 43.4 L522 44.2" stroke="#0f0" stroke-width="1.2" fill="none"/>
<path d="M510 47.8 L515 47 L522 44.6" stroke="#0f0" stroke-width="1.2" fill="none"/>
<path d="M588 43.4 L577 43.6" stroke="#0f0" stroke-width="1.2" fill="none"/>
<path d="M588 47.8 L583 47 L577.5 44.8" stroke="#0f0" stroke-width="1.2" fill="none"/>
<path d="M524 42 C521.5 43 521 45.5 522.5 47.5 C524 49.5 525 50.8 527 50.5 C529.5 50 529 47.5 526.8 46.8" stroke="#ff0" stroke-width="1.2" fill="none"/>
<path d="M573 42 C576 41.8 578 43.5 576.5 45.8 C575 48 573.5 49.5 571.8 50.3 C570 50.6 569.3 49.5 570.3 48.2" stroke="#ff0" stroke-width="1.2" fill="none"/>
<path d="M525.5 42 H533 M527.5 47.5 H537.5" stroke="#0ff" stroke-width="1" fill="none"/>
<path d="M538.5 41.5 V48 M538.5 41.5 H545 M538.5 47.8 H545" stroke="#808080" stroke-width="1" fill="none"/>
<path d="M545 41.8 H553 L549 46.8 M545 47.5 H549" stroke="#0ff" stroke-width="1.1" fill="none"/>
<path d="M550.3 47.5 H572 Q573.2 47.5 573.2 46.3 V43 Q573.2 41.8 572 41.8 H563.7" stroke="#0ff" stroke-width="1.1" fill="none"/>
<path d="M553 43.5 H563" stroke="#808080" stroke-width="1" fill="none"/>
<line x1="573.2" y1="47.5" x2="577.8" y2="62.5" stroke="#808080" stroke-width="1"/>
<path d="M647.5 63.5 V36 Q647.5 32.5 651 32.5 H660.5 V63.5 H657.5 V65.5 M647.5 63.5 H653.5" stroke="#0ff" stroke-width="1.1" fill="none"/>
<path d="M647.5 57.5 C643 57.5 640 60.5 642.5 63.5 C645 66 649 68 652.8 72.5" stroke="#ff0" stroke-width="1" fill="none"/>
<line x1="650.5" y1="65.5" x2="633.5" y2="77.5" stroke="#808080" stroke-width="1"/>
<circle cx="837.8" cy="16.2" r="1.5" stroke="#808080" stroke-width="0.9" fill="none"/>
<circle cx="833.4" cy="18.7" r="1.4" stroke="#808080" stroke-width="0.9" fill="none"/>
<circle cx="842.3" cy="18.7" r="1.4" stroke="#808080" stroke-width="0.9" fill="none"/>
<path d="M824.3 24.5 L830 23.2 L834.6 27.9 H829 C828 26.5 826 25.2 824.3 24.5 Z M851.3 24.5 L845.6 23.2 L841 27.9 H846.6 C847.6 26.5 849.6 25.2 851.3 24.5 Z" stroke="#8a8a8a" stroke-width="0.9" fill="none"/>
<path d="M832.6 27.9 L834 22.4 L837.8 19.4 L841.6 22.4 L843 27.9 M833.6 20.2 L834.4 22.4 M842 20.2 L841.2 22.4 M837.8 17.8 V19.4" stroke="#8a8a8a" stroke-width="0.9" fill="none"/>
<path d="M835 27.5 L836 23.3 L837.8 21.8 L839.6 23.3 L840.6 27.5 Z" stroke="#8a8a8a" stroke-width="0.6" fill="#8a8a8a"/>
<path d="M821.8 31.5 C815.2 39 815.2 55 827.5 66.5" stroke="#8a8a8a" stroke-width="5.8" stroke-dasharray="2 0.55" fill="none"/>
<path d="M854.2 31.5 C860.8 39 860.8 55 848.5 66.5" stroke="#8a8a8a" stroke-width="5.8" stroke-dasharray="2 0.55" fill="none"/>
<path d="M820.6 33 C814 40.5 814.3 54.5 826.5 65 M823 33.8 C818 40.5 818 53.5 828.5 63" stroke="#000" stroke-width="1" stroke-dasharray="0.9 1.5" fill="none"/>
<path d="M855.4 33 C862 40.5 861.7 54.5 849.5 65 M853 33.8 C858 40.5 858 53.5 847.5 63" stroke="#000" stroke-width="1" stroke-dasharray="0.9 1.5" fill="none"/>
<path d="M825.3 37.5 Q838 33.6 850.7 37.5 L850.3 46 C849.8 52 845 55.8 838 58 C831 55.8 826.2 52 825.7 46 Z" stroke="#8a8a8a" stroke-width="1.2" fill="none"/>
<path d="M827.6 39.2 Q838 36.2 848.4 39.2 L848.1 45.8 C847.6 50.5 843.8 53.6 838 55.6 C832.2 53.6 828.4 50.5 827.9 45.8 Z" stroke="#8a8a8a" stroke-width="0.7" fill="none"/>
<rect x="831.5" y="38.5" width="12.5" height="13.2" stroke="#8a8a8a" stroke-width="0.9" fill="none"/>
<path d="M823.5 62 C826 60.5 829 61.5 831 63.5 C833 61 836 61.5 838 64.5 C840 61.5 843 61 845 63.5 C847 61.5 850 60.5 852.5 62 L853.5 69 C851 68 849 68.5 847.5 70 C845.5 68.5 843 69.5 842 71.5 C840.5 72.5 835.5 72.5 834 71.5 C833 69.5 830.5 68.5 828.5 70 C827 68.5 825 68 822.5 69 Z" stroke="#8a8a8a" stroke-width="0.9" fill="#585858"/>
<path d="M831 63.5 L832.5 70 M845 63.5 L843.5 70 M836 65 L837 71.5 M840 65 L839 71.5 M827 62 L827.5 68.5 M849 62 L848.5 68.5" stroke="#000" stroke-width="0.8" fill="none"/>
</g>
<g>
<text class="h" x="36.8" y="605" font-size="10" fill="#fff" text-anchor="middle" textLength="30" lengthAdjust="spacingAndGlyphs" font-weight="bold">合同号</text>
<text class="s" x="76" y="605" font-size="10" fill="#fff" textLength="36" lengthAdjust="spacingAndGlyphs" font-weight="bold">1907013</text>
<text class="h" x="236" y="605" font-size="10" fill="#fff" text-anchor="middle" textLength="31" lengthAdjust="spacingAndGlyphs" font-weight="bold">专卖店</text>
<text class="h" x="265" y="605" font-size="10" fill="#fff" textLength="41" lengthAdjust="spacingAndGlyphs" font-weight="bold">山西太原</text>
<text class="h" x="443.5" y="605" font-size="10" fill="#fff" text-anchor="middle" textLength="42" lengthAdjust="spacingAndGlyphs" font-weight="bold">客户名称</text>
<text class="h" x="481" y="605" font-size="10" fill="#fff" textLength="104" lengthAdjust="spacingAndGlyphs" font-weight="bold">太原颐和天成37-1李总</text>
<text class="h" x="790.6" y="114.5" font-size="7.4" fill="#fff" textLength="22" lengthAdjust="spacingAndGlyphs" font-weight="bold">订单号</text>
<text class="h" x="816" y="113" font-size="6.8" fill="#fff" textLength="41" lengthAdjust="spacingAndGlyphs" font-weight="500">1907013-01C</text>
<text class="h" x="790.6" y="129.5" font-size="7.4" fill="#fff" font-weight="bold">立</text>
<text class="h" x="805.2" y="129.5" font-size="7.4" fill="#fff" font-weight="bold">面</text>
<text class="h" x="816" y="128.6" font-size="8" fill="#fff" textLength="23" lengthAdjust="spacingAndGlyphs" font-weight="500">B2FG05</text>
<text class="h" x="790.6" y="144" font-size="7.4" fill="#fff" font-weight="bold">图</text>
<text class="h" x="805.2" y="144" font-size="7.4" fill="#fff" font-weight="bold">名</text>
<text class="h" x="815.5" y="143.6" font-size="8.2" fill="#fff" textLength="65.5" lengthAdjust="spacingAndGlyphs" font-weight="500">挑空区A立面储藏柜</text>
<text class="h" x="834.5" y="161.3" font-size="8.4" fill="#fff" text-anchor="middle" textLength="27" lengthAdjust="spacingAndGlyphs" font-weight="bold">材质表</text>
<text class="h" x="790.6" y="178.2" font-size="7.4" fill="#fff" font-weight="bold">柜</text>
<text class="h" x="805.2" y="178.2" font-size="7.4" fill="#fff" font-weight="bold">体</text>
<text class="h" x="818" y="178.4" font-size="8.2" fill="#fff" textLength="45.6" lengthAdjust="spacingAndGlyphs" font-weight="500">橡胶木指接板</text>
<text class="h" x="790.6" y="193.2" font-size="7.4" fill="#fff" font-weight="bold">背</text>
<text class="h" x="805.2" y="193.2" font-size="7.4" fill="#fff" font-weight="bold">板</text>
<text class="h" x="818" y="193.4" font-size="8.2" fill="#fff" textLength="45.6" lengthAdjust="spacingAndGlyphs" font-weight="500">橡胶木指接板</text>
<text class="h" x="790.6" y="207.2" font-size="7.4" fill="#fff" font-weight="bold">门</text>
<text class="h" x="805.2" y="207.2" font-size="7.4" fill="#fff" font-weight="bold">板</text>
<text class="h" x="818" y="207.4" font-size="8.2" fill="#fff" textLength="30.4" lengthAdjust="spacingAndGlyphs" font-weight="500">樱桃原木</text>
<text class="h" x="790.6" y="222.2" font-size="7.4" fill="#fff" font-weight="bold">门</text>
<text class="h" x="805.2" y="222.2" font-size="7.4" fill="#fff" font-weight="bold">玻</text>
<text class="h" x="790.6" y="237.2" font-size="7.4" fill="#fff" textLength="22" lengthAdjust="spacingAndGlyphs" font-weight="bold">柜抽盒</text>
<text class="h" x="818" y="237.4" font-size="8.2" fill="#fff" textLength="45.6" lengthAdjust="spacingAndGlyphs" font-weight="500">橡胶木指接板</text>
<text class="h" x="790.6" y="252.2" font-size="7.4" fill="#fff" font-weight="bold">抽</text>
<text class="h" x="805.2" y="252.2" font-size="7.4" fill="#fff" font-weight="bold">面</text>
<text class="h" x="818" y="252.4" font-size="8.2" fill="#fff" textLength="30.4" lengthAdjust="spacingAndGlyphs" font-weight="500">樱桃原木</text>
<text class="h" x="790.6" y="268.2" font-size="7.4" fill="#fff" font-weight="bold">线</text>
<text class="h" x="805.2" y="268.2" font-size="7.4" fill="#fff" font-weight="bold">条</text>
<text class="h" x="818" y="268.4" font-size="8.2" fill="#fff" textLength="30.4" lengthAdjust="spacingAndGlyphs" font-weight="500">樱桃原木</text>
<text class="h" x="790.6" y="284.2" font-size="7.4" fill="#fff" textLength="22" lengthAdjust="spacingAndGlyphs" font-weight="bold">罗马柱</text>
<text class="h" x="790.6" y="297.2" font-size="7.4" fill="#fff" textLength="22" lengthAdjust="spacingAndGlyphs" font-weight="bold">见光板</text>
<text class="h" x="790.6" y="311.2" font-size="7.4" fill="#fff" textLength="22" lengthAdjust="spacingAndGlyphs" font-weight="bold">顶封件</text>
<text class="h" x="790.6" y="325.2" font-size="7.4" fill="#fff" font-weight="bold">拉</text>
<text class="h" x="805.2" y="325.2" font-size="7.4" fill="#fff" font-weight="bold">手</text>
<text class="h" x="818" y="325.4" font-size="8.2" fill="#fff" textLength="15.2" lengthAdjust="spacingAndGlyphs" font-weight="500">客供</text>
<text class="h" x="790.6" y="338.2" font-size="7.4" fill="#fff" font-weight="bold">滑</text>
<text class="h" x="805.2" y="338.2" font-size="7.4" fill="#fff" font-weight="bold">轨</text>
<text class="h" x="818" y="338.4" font-size="8.2" fill="#fff" textLength="53.2" lengthAdjust="spacingAndGlyphs" font-weight="500">百隆托底轨厂供</text>
<text class="h" x="790.6" y="352.2" font-size="7.4" fill="#fff" font-weight="bold">门</text>
<text class="h" x="805.2" y="352.2" font-size="7.4" fill="#fff" font-weight="bold">铰</text>
<text class="h" x="818" y="352.4" font-size="8.2" fill="#fff" textLength="30.4" lengthAdjust="spacingAndGlyphs" font-weight="500">百隆厂供</text>
<text class="h" x="790.6" y="365.2" font-size="7.4" fill="#fff" textLength="22" lengthAdjust="spacingAndGlyphs" font-weight="bold">挂衣杆</text>
<text class="h" x="791.2" y="405.5" font-size="7.4" fill="#fff" textLength="28" lengthAdjust="spacingAndGlyphs" font-weight="bold">色板编号</text>
<text class="s" x="829" y="406" font-size="8.6" fill="#fff" textLength="30" lengthAdjust="spacingAndGlyphs">MS-H017</text>
<text class="h" x="791" y="420.7" font-size="7.4" fill="#fff" textLength="31" lengthAdjust="spacingAndGlyphs" font-weight="bold">油漆说明:</text>
<text class="s" x="790" y="431" font-size="8.6" fill="#fff" textLength="35" lengthAdjust="spacingAndGlyphs">MS-H017,</text>
<text class="h" x="790" y="444" font-size="8.2" fill="#fff" textLength="96.5" lengthAdjust="spacingAndGlyphs">橡胶木指接板柜体和抽盒</text>
<text class="h" x="790" y="454.5" font-size="8.2" fill="#fff" textLength="56" lengthAdjust="spacingAndGlyphs">也做MS-H017色</text>
<text class="h" x="793.4" y="471.6" font-size="7.4" fill="#fff" font-weight="bold">设</text>
<text class="h" x="808.3" y="471.6" font-size="7.4" fill="#fff" font-weight="bold">计</text>
<text class="h" x="820.5" y="470.5" font-size="8.2" fill="#fff" textLength="15.5" lengthAdjust="spacingAndGlyphs" font-weight="500">樊荣</text>
<text class="h" x="793.4" y="485" font-size="7.4" fill="#fff" font-weight="bold">深</text>
<text class="h" x="808.3" y="485" font-size="7.4" fill="#fff" font-weight="bold">化</text>
<text class="h" x="820.5" y="484" font-size="8.2" fill="#fff" textLength="15.5" lengthAdjust="spacingAndGlyphs" font-weight="500">樊荣</text>
<text class="h" x="793.4" y="498.5" font-size="7.4" fill="#fff" font-weight="bold">复</text>
<text class="h" x="808.3" y="498.5" font-size="7.4" fill="#fff" font-weight="bold">核</text>
<text class="h" x="793.4" y="512" font-size="7.4" fill="#fff" font-weight="bold">拆</text>
<text class="h" x="808.3" y="512" font-size="7.4" fill="#fff" font-weight="bold">单</text>
<text class="h" x="793.4" y="532.2" font-size="7.4" fill="#fff" font-weight="bold">审</text>
<text class="h" x="808.3" y="532.2" font-size="7.4" fill="#fff" font-weight="bold">核</text>
<text class="h" x="792.3" y="551.6" font-size="7.4" fill="#fff" font-weight="bold">日</text>
<text class="h" x="807.3" y="551.6" font-size="7.4" fill="#fff" font-weight="bold">期</text>
<text class="h" x="820.5" y="551" font-size="8.2" fill="#fff" textLength="35" lengthAdjust="spacingAndGlyphs" font-weight="500">2019-7-22</text>
<text class="h" x="792.3" y="565.2" font-size="7.4" fill="#fff" font-weight="bold">图</text>
<text class="h" x="807.3" y="565.2" font-size="7.4" fill="#fff" font-weight="bold">号</text>
<text class="h" x="821" y="563.7" font-size="8.2" fill="#fff" textLength="15.5" lengthAdjust="spacingAndGlyphs" font-weight="500">SG09</text>
<text class="h" x="854.5" y="564" font-size="8.2" fill="#fff" textLength="23" lengthAdjust="spacingAndGlyphs" font-weight="500">共11页</text>
<text class="h" x="790" y="582" font-size="7.6" fill="#fff" textLength="62" lengthAdjust="spacingAndGlyphs" font-weight="bold">客户确认（签字）:</text>
<text class="s" x="140.5" y="31.8" font-size="5.6" fill="#00d400" text-anchor="middle">1007</text>
<text class="s" x="202.5" y="31.8" font-size="5.6" fill="#00d400" text-anchor="middle">1006</text>
<text class="s" x="264.5" y="31.8" font-size="5.6" fill="#00d400" text-anchor="middle">1007</text>
<text class="s" x="109.5" y="44.7" font-size="5.6" fill="#00d400" text-anchor="middle">18</text>
<text class="s" x="141" y="44.7" font-size="5.6" fill="#00d400" text-anchor="middle">971</text>
<text class="s" x="168" y="44.7" font-size="5.6" fill="#00d400" text-anchor="middle">18</text>
<text class="s" x="177" y="44.7" font-size="5.6" fill="#00d400" text-anchor="middle">18</text>
<text class="s" x="203" y="44.7" font-size="5.6" fill="#00d400" text-anchor="middle">970</text>
<text class="s" x="230" y="44.7" font-size="5.6" fill="#00d400" text-anchor="middle">18</text>
<text class="s" x="265" y="44.7" font-size="5.6" fill="#00d400" text-anchor="middle">971</text>
<text class="s" x="125.5" y="88.6" font-size="5.6" fill="#00d400" text-anchor="middle">500</text>
<text class="s" x="156.5" y="88.6" font-size="5.6" fill="#00d400" text-anchor="middle">500</text>
<text class="s" x="187.5" y="88.6" font-size="5.6" fill="#00d400" text-anchor="middle">500</text>
<text class="s" x="218.5" y="88.6" font-size="5.6" fill="#00d400" text-anchor="middle">500</text>
<text class="s" x="249.5" y="88.6" font-size="5.6" fill="#00d400" text-anchor="middle">500</text>
<text class="s" x="280.5" y="88.6" font-size="5.6" fill="#00d400" text-anchor="middle">500</text>
<text class="s" x="112.5" y="88.6" font-size="5.6" fill="#00d400" text-anchor="middle">3</text>
<text class="s" x="143.5" y="88.6" font-size="5.6" fill="#00d400" text-anchor="middle">3</text>
<text class="s" x="174.5" y="88.6" font-size="5.6" fill="#00d400" text-anchor="middle">3</text>
<text class="s" x="205.5" y="88.6" font-size="5.6" fill="#00d400" text-anchor="middle">3</text>
<text class="s" x="236.5" y="88.6" font-size="5.6" fill="#00d400" text-anchor="middle">3</text>
<text class="s" x="267.5" y="88.6" font-size="5.6" fill="#00d400" text-anchor="middle">3</text>
<text class="s" x="107" y="88.6" font-size="4.5" fill="#00d400" text-anchor="middle">18</text>
<text class="s" x="203" y="98.7" font-size="5.6" fill="#00d400" text-anchor="middle">3150</text>
<text class="s" x="204.2" y="111" font-size="7" fill="#fff" text-anchor="middle" textLength="19.8" lengthAdjust="spacingAndGlyphs" font-weight="500">平面图</text>
<text class="s" x="95.5" y="64" font-size="4" fill="#00d400" text-anchor="middle" transform="rotate(-90 95.5 64)">360</text>
<text class="s" x="84.6" y="229.5" font-size="6.2" fill="#00d400" text-anchor="middle" transform="rotate(-90 84.6 229.5)">2244</text>
<text class="n" x="342" y="156.7" font-size="6.9" fill="#d0d0d0" textLength="55" lengthAdjust="spacingAndGlyphs">50*22平板收口条:</text>
<text class="n" x="342" y="166.2" font-size="6.9" fill="#d0d0d0" textLength="73" lengthAdjust="spacingAndGlyphs">3.1米=1条, 2.44米=2条</text>
<text class="n" x="342.5" y="300.2" font-size="6.9" fill="#d0d0d0" textLength="60" lengthAdjust="spacingAndGlyphs">MS-C27刀形100mm高,</text>
<text class="n" x="342.5" y="310.2" font-size="6.9" fill="#d0d0d0" textLength="31" lengthAdjust="spacingAndGlyphs">3.1米=1条</text>
<text class="s" x="206.6" y="318.6" font-size="7" fill="#fff" text-anchor="middle" textLength="27" lengthAdjust="spacingAndGlyphs" font-weight="500">正立面图</text>
<text class="s" x="443.5" y="174" font-size="5.6" fill="#00d400" text-anchor="middle">50</text>
<text class="s" x="425.8" y="301" font-size="5.8" fill="#00d400" text-anchor="middle" transform="rotate(-90 425.8 301)">100</text>
<text class="s" x="513" y="166" font-size="4.5" fill="#00d400" text-anchor="middle">18</text>
<text class="s" x="537.5" y="145.8" font-size="5.6" fill="#00d400" text-anchor="middle">310</text>
<text class="s" x="538.5" y="171.7" font-size="5.6" fill="#00d400" text-anchor="middle">560</text>
<text class="s" x="560" y="171" font-size="5.8" fill="#00d400" text-anchor="middle" transform="rotate(-90 560 171)">356</text>
<text class="s" x="560" y="191" font-size="5.8" fill="#00d400" text-anchor="middle" transform="rotate(-90 560 191)">318</text>
<text class="s" x="560" y="212" font-size="5.8" fill="#00d400" text-anchor="middle" transform="rotate(-90 560 212)">318</text>
<text class="s" x="560" y="232.5" font-size="5.8" fill="#00d400" text-anchor="middle" transform="rotate(-90 560 232.5)">316</text>
<text class="s" x="560" y="252" font-size="5.8" fill="#00d400" text-anchor="middle" transform="rotate(-90 560 252)">275</text>
<text class="s" x="560" y="270" font-size="5.8" fill="#00d400" text-anchor="middle" transform="rotate(-90 560 270)">275</text>
<text class="s" x="560" y="288" font-size="5.8" fill="#00d400" text-anchor="middle" transform="rotate(-90 560 288)">276</text>
<text class="s" x="515.2" y="229.5" font-size="6.2" fill="#00d400" text-anchor="middle" transform="rotate(-90 515.2 229.5)">2244</text>
<text class="s" x="511.5" y="300.5" font-size="4.6" fill="#00d400" text-anchor="middle" transform="rotate(-90 511.5 300.5)">100</text>
<text class="s" x="559.5" y="300.5" font-size="4.6" fill="#00d400" text-anchor="middle" transform="rotate(-90 559.5 300.5)">100</text>
<text class="s" x="681" y="300.5" font-size="4.6" fill="#00d400" text-anchor="middle" transform="rotate(-90 681 300.5)">100</text>
<text class="s" x="633" y="300.5" font-size="4.2" fill="#00d400" text-anchor="middle" transform="rotate(-90 633 300.5)">100</text>
<text class="n" x="533" y="318.5" font-size="7" fill="#fff" text-anchor="middle" textLength="38" lengthAdjust="spacingAndGlyphs" font-weight="500">A-A侧剖面图</text>
<text class="s" x="635" y="166" font-size="4.5" fill="#00d400" text-anchor="middle">18</text>
<text class="s" x="659.5" y="145.8" font-size="5.6" fill="#00d400" text-anchor="middle">310</text>
<text class="s" x="681" y="171" font-size="5.8" fill="#00d400" text-anchor="middle" transform="rotate(-90 681 171)">356</text>
<text class="s" x="681" y="192" font-size="5.8" fill="#00d400" text-anchor="middle" transform="rotate(-90 681 192)">356</text>
<text class="s" x="681" y="212" font-size="5.8" fill="#00d400" text-anchor="middle" transform="rotate(-90 681 212)">356</text>
<text class="s" x="681" y="233" font-size="5.8" fill="#00d400" text-anchor="middle" transform="rotate(-90 681 233)">356</text>
<text class="s" x="681" y="249.5" font-size="5.8" fill="#00d400" text-anchor="middle" transform="rotate(-90 681 249.5)">180</text>
<text class="s" x="681" y="266" font-size="5.8" fill="#00d400" text-anchor="middle" transform="rotate(-90 681 266)">356</text>
<text class="s" x="681" y="286" font-size="5.8" fill="#00d400" text-anchor="middle" transform="rotate(-90 681 286)">356</text>
<text class="s" x="657.5" y="251" font-size="4" fill="#00d400" text-anchor="middle" transform="rotate(-90 657.5 251)">180</text>
<text class="s" x="658" y="234.8" font-size="5.6" fill="#00d400" text-anchor="middle">330</text>
<text class="s" x="660" y="266.6" font-size="5.6" fill="#00d400" text-anchor="middle">330</text>
<text class="n" x="656.3" y="318.5" font-size="7" fill="#fff" text-anchor="middle" textLength="38.6" lengthAdjust="spacingAndGlyphs" font-weight="500">B-B侧剖面图</text>
<text class="s" x="140.5" y="364.1" font-size="5.6" fill="#00d400" text-anchor="middle">1007</text>
<text class="s" x="202.5" y="364.1" font-size="5.6" fill="#00d400" text-anchor="middle">1006</text>
<text class="s" x="264.5" y="364.1" font-size="5.6" fill="#00d400" text-anchor="middle">1007</text>
<text class="s" x="140" y="436.3" font-size="6.8" fill="#e4e4e4" text-anchor="middle" textLength="28" lengthAdjust="spacingAndGlyphs">活动层板</text>
<text class="s" x="264.5" y="436.3" font-size="6.8" fill="#e4e4e4" text-anchor="middle" textLength="28" lengthAdjust="spacingAndGlyphs">活动层板</text>
<text class="s" x="140" y="455.9" font-size="6.8" fill="#e4e4e4" text-anchor="middle" textLength="28" lengthAdjust="spacingAndGlyphs">活动层板</text>
<text class="s" x="264.5" y="455.9" font-size="6.8" fill="#e4e4e4" text-anchor="middle" textLength="28" lengthAdjust="spacingAndGlyphs">活动层板</text>
<text class="s" x="140" y="474.2" font-size="6.8" fill="#e4e4e4" text-anchor="middle" textLength="28" lengthAdjust="spacingAndGlyphs">活动层板</text>
<text class="s" x="264.5" y="474.2" font-size="6.8" fill="#e4e4e4" text-anchor="middle" textLength="28" lengthAdjust="spacingAndGlyphs">活动层板</text>
<text class="s" x="140" y="491.6" font-size="6.8" fill="#e4e4e4" text-anchor="middle" textLength="28" lengthAdjust="spacingAndGlyphs">活动层板</text>
<text class="s" x="264.5" y="491.6" font-size="6.8" fill="#e4e4e4" text-anchor="middle" textLength="28" lengthAdjust="spacingAndGlyphs">活动层板</text>
<text class="s" x="202.5" y="436.3" font-size="6.8" fill="#e4e4e4" text-anchor="middle" textLength="28" lengthAdjust="spacingAndGlyphs">活动层板</text>
<text class="s" x="202.5" y="490" font-size="6.8" fill="#e4e4e4" text-anchor="middle" textLength="27" lengthAdjust="spacingAndGlyphs">活动层板</text>
<text class="h" x="148.4" y="528.4" font-size="7.4" fill="#f4f4f4" textLength="10.6" lengthAdjust="spacingAndGlyphs">A-A</text>
<text class="h" x="189.4" y="528.4" font-size="7.4" fill="#f4f4f4" textLength="10.6" lengthAdjust="spacingAndGlyphs">B-B</text>
<text class="h" x="265.4" y="528.4" font-size="7.4" fill="#f4f4f4" textLength="10.6" lengthAdjust="spacingAndGlyphs">A-A</text>
<text class="s" x="204" y="541.2" font-size="7.2" fill="#fff" text-anchor="middle" textLength="55.5" lengthAdjust="spacingAndGlyphs" font-weight="500">柜内结构正立面图</text>
<text class="s" x="515" y="360.3" font-size="7" fill="#e8e8e8" textLength="76.5" lengthAdjust="spacingAndGlyphs" font-weight="500">抽前后板比抽侧板高一些</text>
<text class="s" x="549.8" y="413.5" font-size="5.6" fill="#00d400" text-anchor="middle" transform="rotate(-90 549.8 413.5)">180</text>
<text class="s" x="487.8" y="413" font-size="5.6" fill="#00d400" text-anchor="middle" transform="rotate(-90 487.8 413)">197</text>
<text class="s" x="532.5" y="449.3" font-size="7" fill="#f0f0f0" text-anchor="middle" textLength="33" lengthAdjust="spacingAndGlyphs" font-weight="500">抽盒侧视图</text>
<text class="s" x="555.5" y="31" font-size="4.5" fill="#00d400" text-anchor="middle">3</text>
<text class="s" x="559.5" y="38.5" font-size="4" fill="#00d400" text-anchor="middle" transform="rotate(-90 559.5 38.5)">18</text>
<text class="s" x="552" y="61.5" font-size="4.5" fill="#00d400" text-anchor="middle">3</text>
<text class="h" x="579.2" y="66.8" font-size="7" fill="#e0e0e0" textLength="20.2" lengthAdjust="spacingAndGlyphs">MS-B53</text>
<text class="s" x="528.5" y="74.8" font-size="7" fill="#fff" text-anchor="middle" textLength="34" lengthAdjust="spacingAndGlyphs" font-weight="500">柜门大样图</text>
<text class="h" x="610" y="75.8" font-size="7" fill="#e0e0e0" textLength="20.5" lengthAdjust="spacingAndGlyphs">MS-B53</text>
<text class="s" x="627" y="94.6" font-size="7" fill="#fff" text-anchor="middle" textLength="34" lengthAdjust="spacingAndGlyphs" font-weight="500">抽面大样图</text>
<text class="s" x="657.3" y="93" font-size="4.6" fill="#00d400" text-anchor="middle">18</text>
<text class="s" x="838" y="50.6" font-size="12" fill="#8a8a8a" text-anchor="middle" textLength="12.5" lengthAdjust="spacingAndGlyphs" font-weight="bold">MS</text>
<text class="s" x="823.6" y="85.3" font-size="9.6" fill="#8a8a8a" text-anchor="middle" font-weight="bold">木</text>
<text class="s" x="836.7" y="85.3" font-size="9.6" fill="#8a8a8a" text-anchor="middle" font-weight="bold">斯</text>
<text class="s" x="851.5" y="85.3" font-size="9.6" fill="#8a8a8a" text-anchor="middle" font-weight="bold">特</text>
<text class="s" x="836.2" y="95" font-size="8.8" fill="#8a8a8a" text-anchor="middle" textLength="52.5" lengthAdjust="spacingAndGlyphs" font-weight="bold">MOSTHOME</text>
</g>
</svg>
</body></html>
